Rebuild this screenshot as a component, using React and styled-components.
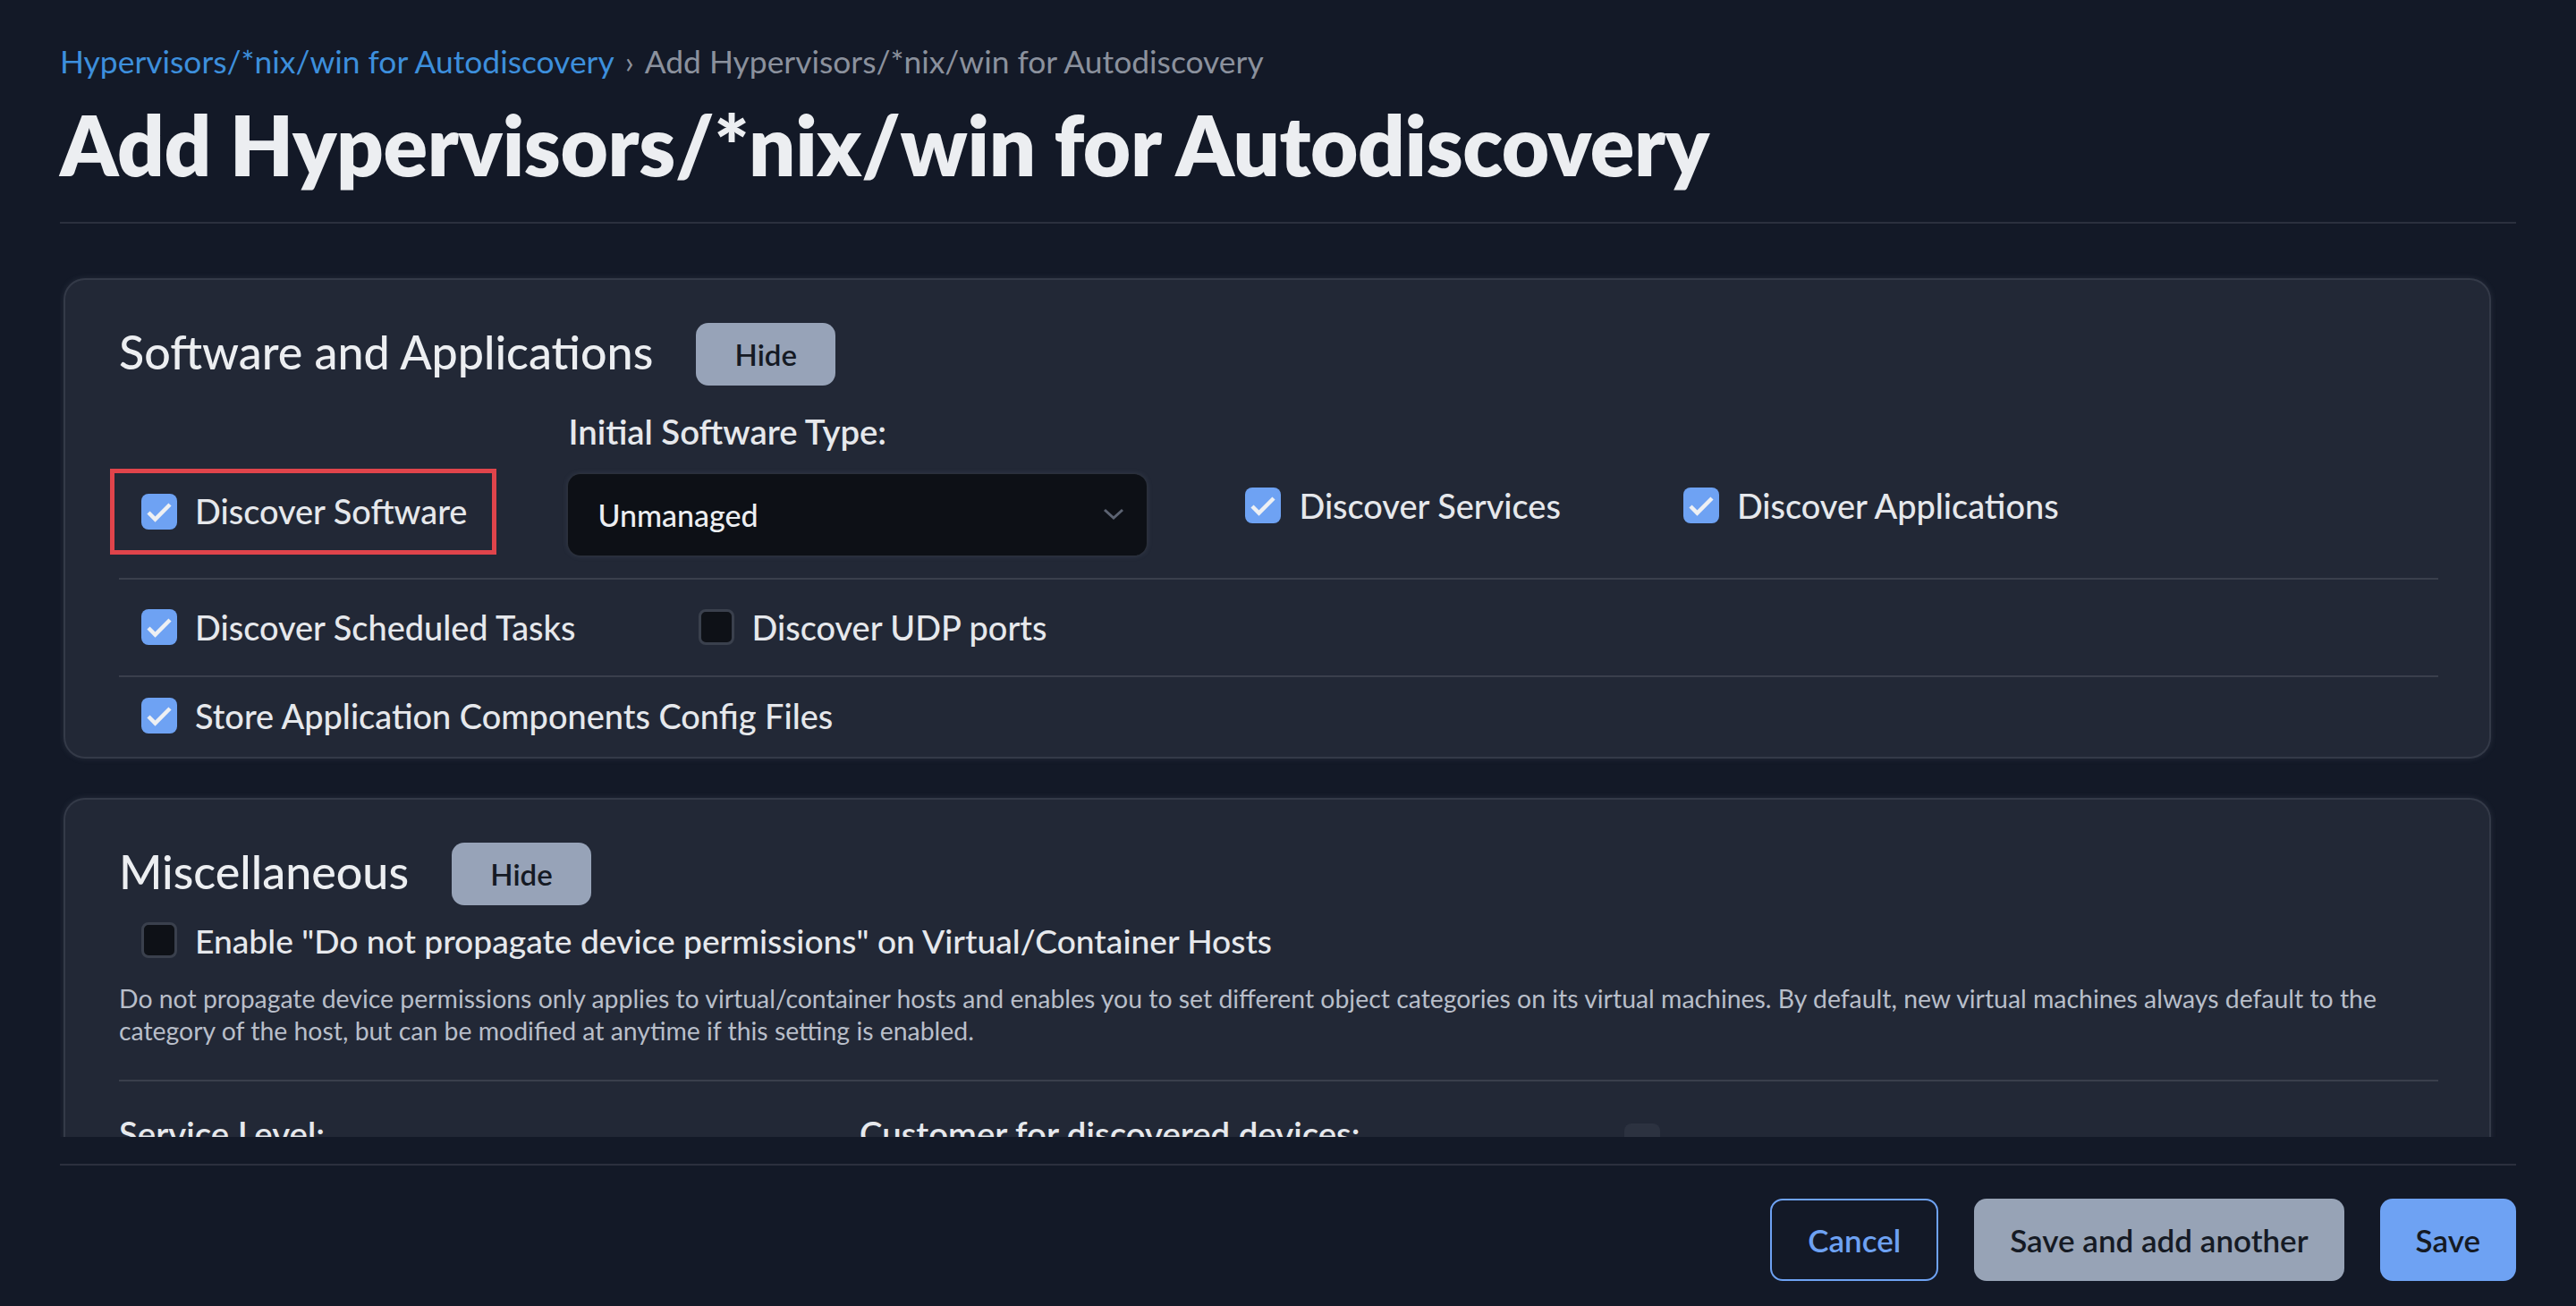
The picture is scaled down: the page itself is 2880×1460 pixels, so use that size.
import React from 'react';
import styled, { createGlobalStyle } from 'styled-components';

const GlobalStyle = createGlobalStyle`
  * { box-sizing: border-box; }
  body {
    margin: 0;
    background: #131927;
    font-family: Lato, "Open Sans", sans-serif;
    color: #e6e8ec;
  }
`;

const Page = styled.div`
  height: 1460px;
  display: flex;
  flex-direction: column;
  padding: 0 67px;
  overflow: hidden;
`;

const Header = styled.header`
  padding-top: 48px;
  padding-bottom: 30px;
  border-bottom: 2px solid #2b303e;
`;

const Breadcrumb = styled.nav`
  font-size: 35.4px;
  line-height: 1.2;
  color: #8b919d;
  display: flex;
  gap: 12px;
`;

const Crumb = styled.a`
  color: #3d8fdc;
  text-decoration: none;
`;

const Title = styled.h1`
  margin: 17px 0 0;
  font-size: 92px;
  line-height: 1.2;
  font-weight: 800;
  color: #eceef1;
  letter-spacing: -0.4px;
`;

const ScrollArea = styled.div`
  flex: 1;
  min-height: 0;
  overflow: hidden;
  padding: 63px 30px 0 6px;
  display: flex;
  flex-direction: column;
  gap: 48px;
`;

const Card = styled.section`
  background: #222836;
  border-radius: 22px;
  padding: 48px 57px 23px 60px;
  box-shadow: 0 0 0 2px #343a48, 0 0 8px rgba(160, 170, 190, 0.22);
  flex-shrink: 0;
`;

const CardHead = styled.div`
  display: flex;
  align-items: center;
  gap: 48px;
`;

const CardTitle = styled.h2`
  margin: 0 0 6px;
  font-size: 52px;
  font-weight: 500;
  color: #eceef1;
`;

const HideButton = styled.button`
  width: 156px;
  height: 70px;
  border: none;
  border-radius: 14px;
  background: #97a3b8;
  color: #151a24;
  font-family: inherit;
  font-size: 33px;
  font-weight: 600;
`;

const Row = styled.div`
  display: flex;
  align-items: ${p => (p.$bottom ? 'flex-end' : 'center')};
  gap: 85px;
  padding: ${p => p.$pad || '0'};
  border-bottom: ${p => (p.$divider ? '2px solid #3a3f4c' : 'none')};
`;

const CheckItem = styled.label`
  display: flex;
  align-items: center;
  gap: 20px;
  padding: 0 27px 0 25px;
  font-size: ${p => p.$size || '37.9px'};
  font-weight: 500;
  color: #e6e8ec;
  white-space: nowrap;
  ${p => p.$lift && 'margin-bottom: 33px;'}
  ${p =>
    p.$marked &&
    `
    height: 86px;
    padding: 0 28px 0 30px;
    margin: 0 0 6px -5px;
    outline: 5px solid #e0444b;
  `}
`;

const Box = styled.span`
  width: 40px;
  height: 40px;
  flex-shrink: 0;
  border-radius: 8px;
  display: flex;
  align-items: center;
  justify-content: center;
  background: ${p => (p.$checked ? '#6ea2f3' : '#0e1117')};
  border: ${p => (p.$checked ? 'none' : '3px solid #3a404d')};
`;

const FieldGroup = styled.div`
  display: flex;
  flex-direction: column;
  gap: 24px;
`;

const FieldLabel = styled.div`
  font-size: 38.3px;
  font-weight: 600;
  color: #e6e8ec;
  line-height: 1.2;
`;

const Select = styled.div`
  width: 647px;
  height: 91px;
  border-radius: 14px;
  background: #0d1016;
  box-shadow: 0 0 0 1px #2b303b, 0 0 6px rgba(120, 130, 150, 0.25);
  display: flex;
  align-items: center;
  justify-content: space-between;
  padding: 0 22px 0 33px;
  font-size: 34px;
  font-weight: 500;
  color: #eceef1;
`;

const HelpText = styled.p`
  margin: 24px 0 0;
  padding-bottom: 36px;
  font-size: 28.4px;
  line-height: 36.5px;
  color: #b8bec9;
  border-bottom: 2px solid #3a3f4c;
`;

const FieldLine = styled.div`
  display: grid;
  grid-template-columns: 828px 855px 60px;
  align-items: start;
  padding-top: 36px;
`;

const SmallBox = styled.span`
  width: 40px;
  height: 40px;
  border-radius: 8px;
  background: #2c3240;
  margin-top: 11px;
`;

const Footer = styled.footer`
  margin-top: 30px;
  border-top: 2px solid #2b303e;
  padding: 37px 0 28px;
  display: flex;
  justify-content: flex-end;
  gap: 40px;
`;

const Button = styled.button`
  height: 92px;
  padding: 0 40px;
  border-radius: 14px;
  font-family: inherit;
  font-size: 35px;
  font-weight: 600;
  border: ${p => (p.$variant === 'outline' ? '2px solid #6ea2f3' : 'none')};
  background: ${p =>
    p.$variant === 'outline' ? 'transparent' : p.$variant === 'muted' ? '#97a3b6' : '#6ea2f3'};
  color: ${p => (p.$variant === 'outline' ? '#6ea2f3' : '#151a24')};
`;

const Check = ({ checked }) => (
  <Box $checked={checked}>
    {checked && (
      <svg width="40" height="40" viewBox="0 0 40 40">
        <polyline points="8,21 15.5,28.5 32,12" fill="none" stroke="#eef0f3" strokeWidth="4.5" />
      </svg>
    )}
  </Box>
);

const Chevron = () => (
  <svg width="30" height="30" viewBox="0 0 30 30">
    <polyline points="5,10 15,19 25,10" fill="none" stroke="#5c6372" strokeWidth="3" />
  </svg>
);

export default function App() {
  return (
    <>
      <GlobalStyle />
      <Page>
        <Header>
          <Breadcrumb>
            <Crumb href="#">Hypervisors/*nix/win for Autodiscovery</Crumb>
            <span>›</span>
            <span>Add Hypervisors/*nix/win for Autodiscovery</span>
          </Breadcrumb>
          <Title>Add Hypervisors/*nix/win for Autodiscovery</Title>
        </Header>

        <ScrollArea>
          <Card>
            <CardHead>
              <CardTitle>Software and Applications</CardTitle>
              <HideButton>Hide</HideButton>
            </CardHead>
            <Row $bottom $divider $pad="29px 0 25px">
              <CheckItem $marked>
                <Check checked />
                Discover Software
              </CheckItem>
              <FieldGroup>
                <FieldLabel>Initial Software Type:</FieldLabel>
                <Select>
                  Unmanaged
                  <Chevron />
                </Select>
              </FieldGroup>
              <CheckItem $lift>
                <Check checked />
                Discover Services
              </CheckItem>
              <CheckItem $lift>
                <Check checked />
                Discover Applications
              </CheckItem>
            </Row>
            <Row $divider $pad="31px 0">
              <CheckItem>
                <Check checked />
                Discover Scheduled Tasks
              </CheckItem>
              <CheckItem>
                <Check />
                Discover UDP ports
              </CheckItem>
            </Row>
            <Row $pad="21px 0 0">
              <CheckItem>
                <Check checked />
                Store Application Components Config Files
              </CheckItem>
            </Row>
          </Card>

          <Card>
            <CardHead>
              <CardTitle>Miscellaneous</CardTitle>
              <HideButton>Hide</HideButton>
            </CardHead>
            <Row $pad="17px 0 0">
              <CheckItem $size="37.2px">
                <Check />
                Enable "Do not propagate device permissions" on Virtual/Container Hosts
              </CheckItem>
            </Row>
            <HelpText>
              Do not propagate device permissions only applies to virtual/container hosts and enables you to set
              different object categories on its virtual machines. By default, new virtual machines always default to
              the category of the host, but can be modified at anytime if this setting is enabled.
            </HelpText>
            <FieldLine>
              <FieldLabel>Service Level:</FieldLabel>
              <FieldLabel>Customer for discovered devices:</FieldLabel>
              <SmallBox />
            </FieldLine>
          </Card>
        </ScrollArea>

        <Footer>
          <Button $variant="outline">Cancel</Button>
          <Button $variant="muted">Save and add another</Button>
          <Button>Save</Button>
        </Footer>
      </Page>
    </>
  );
}
